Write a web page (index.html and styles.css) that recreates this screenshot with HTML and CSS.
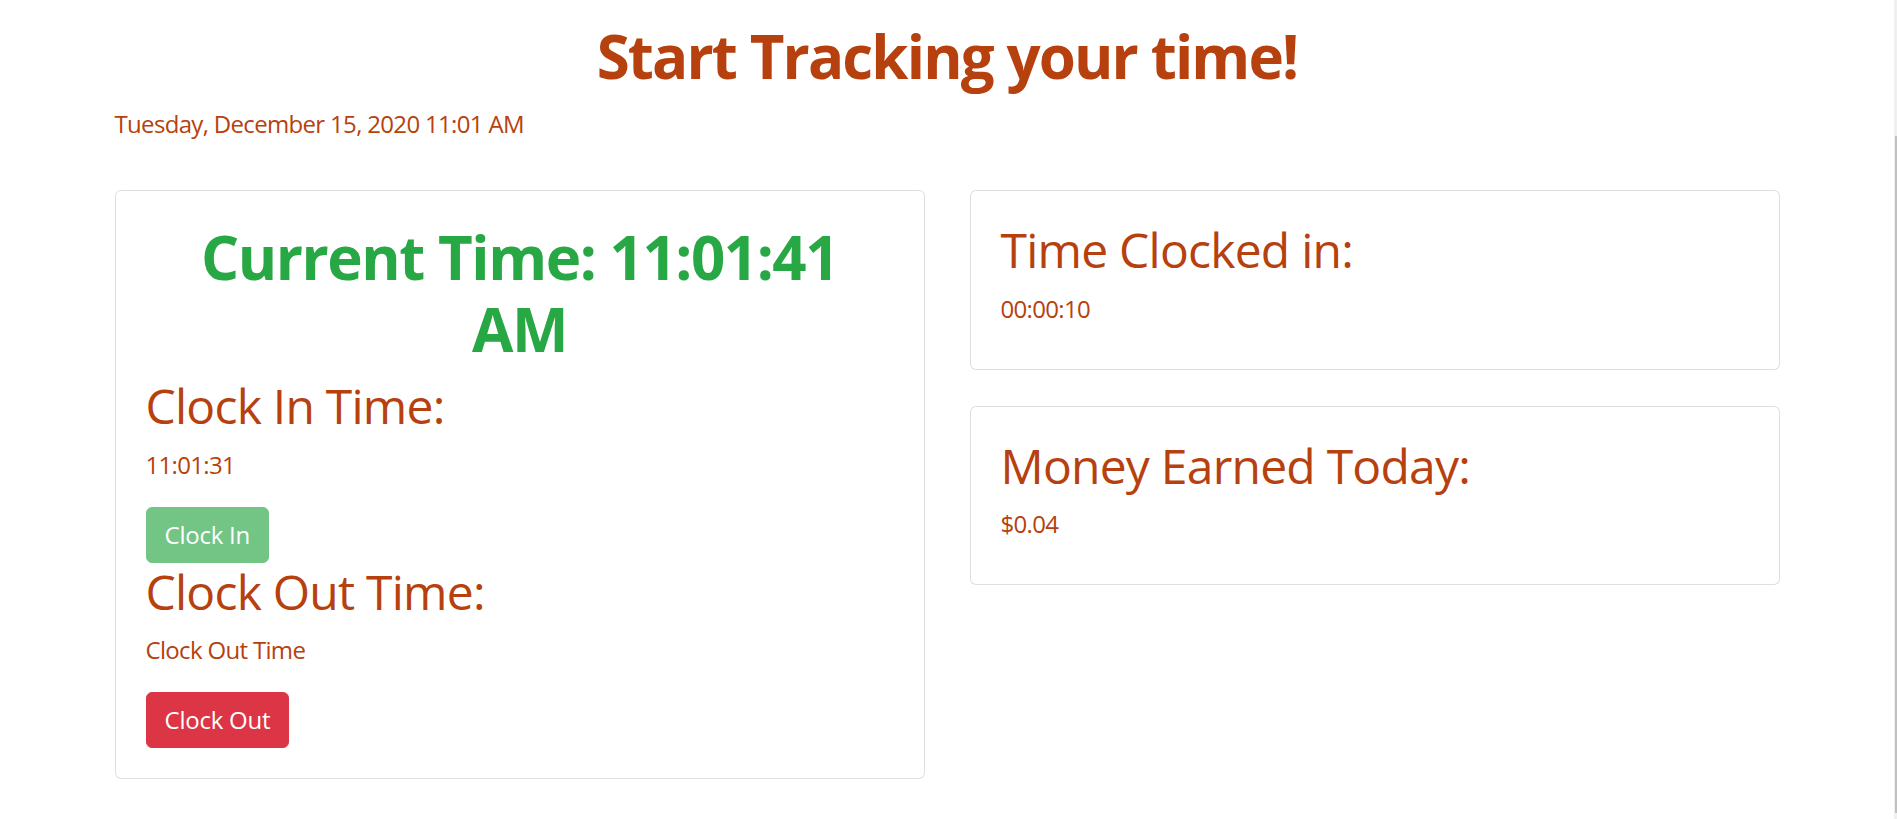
FILE: index.html
```html
<!DOCTYPE html>
<html lang="en">
<head>
<meta charset="utf-8">
<title>Time Tracker</title>
<link rel="stylesheet" href="styles.css">
</head>
<body>
<div class="page">
  <div class="container">
    <h1 class="title">Start Tracking your time!</h1>
    <p class="date">Tuesday, December 15, 2020 11:01 AM</p>
    <div class="row">
      <div class="col">
        <div class="card">
          <h1 class="current">Current Time: 11:01:41 AM</h1>
          <h2 class="heading">Clock In Time:</h2>
          <p class="value">11:01:31</p>
          <button class="btn btn-success" disabled>Clock In</button>
          <h2 class="heading">Clock Out Time:</h2>
          <p class="value">Clock Out Time</p>
          <button class="btn btn-danger">Clock Out</button>
        </div>
      </div>
      <div class="col col-stack">
        <div class="card">
          <h2 class="heading">Time Clocked in:</h2>
          <p class="value value-last">00:00:10</p>
        </div>
        <div class="card">
          <h2 class="heading">Money Earned Today:</h2>
          <p class="value value-last">$0.04</p>
        </div>
      </div>
    </div>
  </div>
</div>
<div class="scrollbar"><div class="scrollbar-thumb"></div></div>
</body>
</html>
```
FILE: styles.css
```css
html, body {
  margin: 0;
  padding: 0;
  background: #fff;
}

body {
  font-family: "Open Sans", "Noto Sans", sans-serif;
  font-size: 24px;
  line-height: 1.5;
  color: #b7410e;
  letter-spacing: -0.028em;
}

.page {
  margin-right: 3px;
}

.container {
  max-width: 1710px;
  margin: 0 auto;
  padding: 0 22.5px;
  box-sizing: border-box;
}

.title {
  margin: 20px 0 14px;
  font-size: 60px;
  font-weight: 700;
  line-height: 1.2;
  text-align: center;
  letter-spacing: -0.031em;
}

.date {
  margin: 0 0 48px;
}

.row {
  display: grid;
  grid-template-columns: 1fr 1fr;
  column-gap: 45px;
  align-items: start;
}

.col-stack {
  display: flex;
  flex-direction: column;
  gap: 36px;
}

.card {
  border: 1px solid rgba(0, 0, 0, 0.125);
  border-radius: 6px;
  padding: 30px;
  background: #fff;
}

.current {
  margin: 0 0 12px;
  padding: 0 24px;
  font-size: 60px;
  font-weight: 700;
  line-height: 1.2;
  text-align: center;
  color: #28a745;
  letter-spacing: -0.024em;
}

.heading {
  margin: 0 0 12px;
  font-size: 48px;
  font-weight: 400;
  line-height: 1.2;
  letter-spacing: -0.016em;
}

.value {
  margin: 0 0 24px;
}

.value-last {
  margin-bottom: 12px;
}

.btn {
  display: block;
  width: fit-content;
  margin: 0;
  padding: 9px 18px;
  font-family: inherit;
  font-size: 24px;
  line-height: 36px;
  letter-spacing: -0.01em;
  color: #fff;
  border: 1px solid transparent;
  border-radius: 6px;
}

.btn-success {
  background: #28a745;
  border-color: #28a745;
  opacity: 0.65;
}

.btn-danger {
  background: #dc3545;
  border-color: #dc3545;
}

.scrollbar {
  position: fixed;
  top: 0;
  right: 0;
  width: 3px;
  height: 100%;
  background: #f0f0f0;
}

.scrollbar-thumb {
  position: absolute;
  top: 136px;
  right: 0;
  width: 2px;
  height: 677px;
  background: #c1c1c1;
}
```
